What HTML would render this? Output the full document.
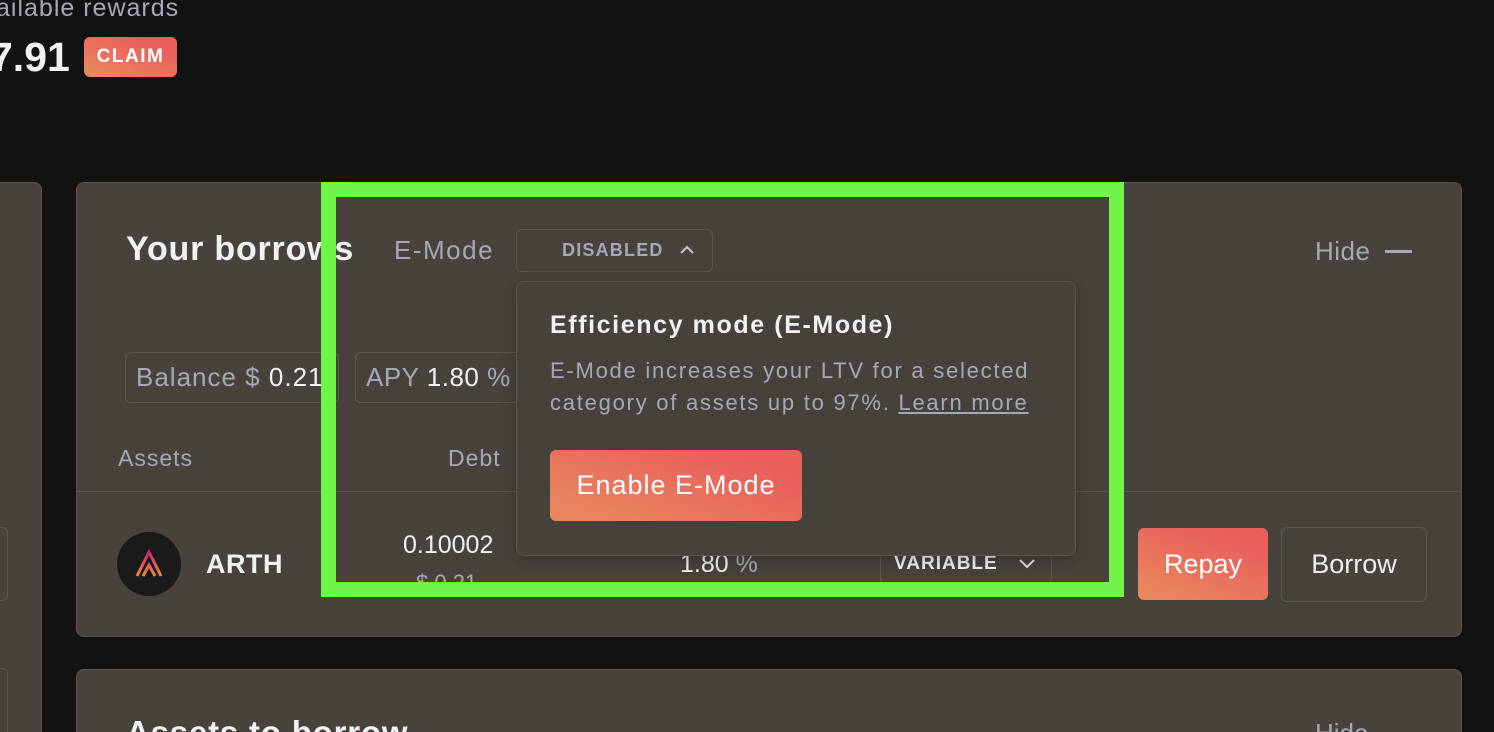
<!DOCTYPE html><html><head><style>
html,body{margin:0;width:1494px;height:732px;overflow:hidden}
body{background:#121212;position:relative;font-family:"Liberation Sans",sans-serif;}
.a{position:absolute;white-space:nowrap}
.card{position:absolute;background:#48423d;border:1px solid #5a544e;border-radius:8px;box-sizing:border-box}
.g{color:#a5a8b6}.w{color:#f1f1f3}
.grad{background:linear-gradient(200deg,#e95f5c 20%,#e9865e 90%);border-radius:6px}
.btn{position:absolute;border:1px solid #5c5650;border-radius:6px;box-sizing:border-box}
</style></head><body>
<div class="a g" style="left:-4px;top:-6px;font-size:25px;letter-spacing:1px">ailable rewards</div>
<div class="a w" style="left:-10px;top:34px;font-size:41px;font-weight:bold">7.91</div>
<div class="a grad" style="left:84px;top:37px;width:93px;height:40px;color:#fff;font-weight:bold;font-size:19px;letter-spacing:1.5px;line-height:40px;text-align:center">CLAIM</div>

<div class="card" style="left:-10px;top:182px;width:52px;height:600px"></div>
<div class="btn" style="left:-20px;top:527px;width:28px;height:74px"></div>
<div class="btn" style="left:-20px;top:668px;width:28px;height:74px"></div>

<div class="card" style="left:76px;top:182px;width:1386px;height:455px"></div>
<div class="card" style="left:76px;top:669px;width:1386px;height:100px"></div>
<div class="a w" style="left:126px;top:714px;font-size:33px;font-weight:bold;letter-spacing:0.8px">Assets to borrow</div>
<div class="a g" style="left:1315px;top:718px;font-size:26px">Hide</div>

<div class="a w" style="left:126px;top:230px;font-size:34px;font-weight:bold;letter-spacing:0.8px">Your borrows</div>
<div class="a g" style="left:394px;top:235px;font-size:26px;letter-spacing:1.5px">E-Mode</div>
<div class="btn" style="left:516px;top:229px;width:197px;height:43px"></div>
<div class="a g" style="left:562px;top:240px;font-size:18px;font-weight:bold;letter-spacing:1.2px">DISABLED</div>
<svg class="a" style="left:679px;top:244px" width="16" height="12"><path d="M2 9 L8 3 L14 9" stroke="#c6c8d0" stroke-width="2" fill="none"/></svg>
<div class="a g" style="left:1315px;top:236px;font-size:26px;letter-spacing:0.5px">Hide</div>
<div class="a" style="left:1385px;top:250px;width:27px;height:3px;background:#a5a8b6"></div>

<div class="btn" style="left:125px;top:352px;width:214px;height:51px"></div>
<div class="a" style="left:136px;top:362px;font-size:26px;letter-spacing:1px"><span class="g">Balance $</span><span class="w"> 0.21</span></div>
<div class="btn" style="left:355px;top:352px;width:180px;height:51px"></div>
<div class="a" style="left:366px;top:362px;font-size:26px;letter-spacing:0.5px"><span class="g">APY</span><span class="w"> 1.80 </span><span class="g">%</span></div>

<div class="a g" style="left:118px;top:445px;font-size:23px;letter-spacing:1px">Assets</div>
<div class="a g" style="left:448px;top:445px;font-size:23px;letter-spacing:1px">Debt</div>
<div class="a" style="left:77px;top:491px;width:1384px;height:1px;background:#5a544e"></div>

<div class="a" style="left:117px;top:532px;width:64px;height:64px;border-radius:50%;background:#1a1a1a"></div>
<svg class="a" style="left:133px;top:548px" width="32" height="32"><defs><linearGradient id="l" x1="0" y1="1" x2="0" y2="0"><stop offset="0" stop-color="#f08a3c"/><stop offset="1" stop-color="#c8287a"/></linearGradient></defs><path d="M4 28 L16 4 L28 28 M10 28 L16 17 L22 28" stroke="url(#l)" stroke-width="3" fill="none"/></svg>
<div class="a w" style="left:206px;top:549px;font-size:27px;font-weight:bold;letter-spacing:0.5px">ARTH</div>
<div class="a w" style="left:403px;top:531px;font-size:25px">0.10002 </div>
<div class="a g" style="left:416px;top:570px;font-size:22px">$ 0.21</div>
<div class="a w" style="left:680px;top:550px;font-size:25px">1.80 <span class="g">%</span></div>
<div class="btn" style="left:880px;top:538px;width:172px;height:46px"></div>
<div class="a w" style="left:894px;top:553px;font-size:19px;font-weight:bold;letter-spacing:1px">VARIABLE</div>
<svg class="a" style="left:1018px;top:557px" width="18" height="12"><path d="M2 3 L9 10 L16 3" stroke="#e0e0e4" stroke-width="2" fill="none"/></svg>
<div class="a grad" style="left:1138px;top:528px;width:130px;height:72px;color:#fff;font-size:27px;line-height:72px;text-align:center">Repay</div>
<div class="btn" style="left:1281px;top:527px;width:146px;height:75px;color:#eee;font-size:27px;line-height:73px;text-align:center">Borrow</div>

<div class="a" style="left:516px;top:281px;width:560px;height:275px;background:#47413c;border:1px solid #5a544e;border-radius:8px;box-sizing:border-box;box-shadow:0 4px 16px rgba(0,0,0,.25)"></div>
<div class="a w" style="left:550px;top:311px;font-size:25px;font-weight:bold;letter-spacing:1.6px">Efficiency mode (E-Mode)</div>
<div class="a g" style="left:550px;top:355px;font-size:22px;line-height:32px;letter-spacing:1.75px">E-Mode increases your LTV for a selected<br>category of assets up to 97%. <span style="text-decoration:underline">Learn more</span></div>
<div class="a grad" style="left:550px;top:450px;width:252px;height:71px;color:#fff;font-size:27px;line-height:71px;text-align:center;letter-spacing:1px">Enable E-Mode</div>

<div class="a" style="left:321px;top:182px;width:803px;height:415px;border:15px solid #72f54a;box-sizing:border-box"></div>
</body></html>
